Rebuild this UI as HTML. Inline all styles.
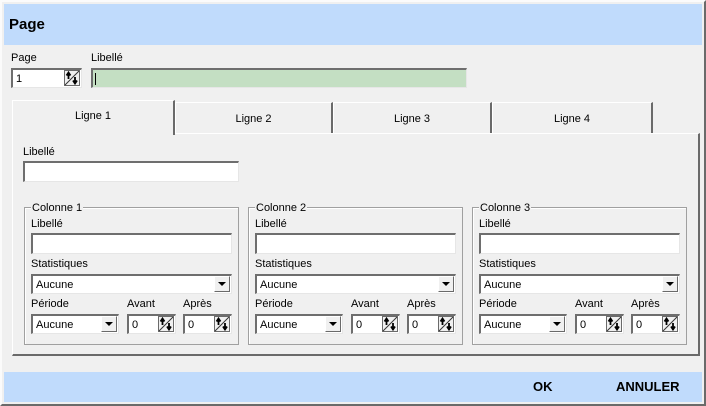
<!DOCTYPE html>
<html><head><meta charset="utf-8"><style>
*{margin:0;padding:0;box-sizing:border-box}
body{width:706px;height:406px;background:#f0f0f0;position:relative;overflow:hidden;font-family:"Liberation Sans",sans-serif;font-size:11px;color:#000}
.a{position:absolute}
.frame{left:0;top:0;width:706px;height:406px;border-top:2px solid #fbfbfb;border-left:2px solid #fbfbfb;border-right:2px solid #6a6a6a;border-bottom:2px solid #6a6a6a}
.hdr{left:4px;top:4px;width:698px;height:41px;background:#c0dbfc}
.ftr{left:4px;top:372px;width:698px;height:30px;background:#c0dbfc}
.in{position:absolute;background:#fff;border-top:2px solid #6e6e6e;border-left:2px solid #6e6e6e;border-right:1px solid #e6e6e6;border-bottom:1px solid #e6e6e6}
.lbl{position:absolute;font-size:11px;line-height:12px;white-space:nowrap}
.dd{position:absolute;right:1px;top:0px;width:16px;height:16px;background:#f0f0f0;border-top:1px solid #fff;border-left:1px solid #fff;border-right:1px solid #6a6a6a;border-bottom:1px solid #6a6a6a}
.dd:after{content:"";position:absolute;left:3px;top:5px;border-left:4px solid transparent;border-right:4px solid transparent;border-top:4px solid #000}
.val{position:absolute;left:3px;top:3px;font-size:11px}
.sp{position:absolute;right:1px;top:0px;width:16px;height:16px}
.tab{position:absolute;text-align:center;font-size:11px;border-top:1px solid #fff;border-left:1px solid #fff;border-right:2px solid #6a6a6a}
.grp{position:absolute;border:1px solid #a0a0a0;box-shadow:1px 1px 0 #fff inset}
.gt{position:absolute;top:-6px;left:6px;background:#f0f0f0;font-size:11px;line-height:12px;padding:0 1px}
</style></head><body>
<div class="a frame"></div>
<div class="a hdr"><div class="a" style="left:5px;top:12px;font-size:15px;font-weight:bold">Page</div></div>

<div class="lbl" style="left:11px;top:52px">Page</div>
<div class="in" style="left:11px;top:68px;width:71px;height:20px"><span class="val">1</span>
<svg class="sp" viewBox="0 0 16 16"><rect x="0.5" y="0.5" width="15" height="15" fill="#f0f0f0" stroke="#6a6a6a"/><line x1="1" y1="15" x2="15" y2="1" stroke="#333"/><path d="M4.5 9V3M2.5 5.5l2-3 2 3" stroke="#000" stroke-width="1.8" fill="none"/><path d="M11 7v6M9 10.5l2 3 2-3" stroke="#000" stroke-width="1.8" fill="none"/></svg></div>
<div class="lbl" style="left:91px;top:52px">Libellé</div>
<div class="in" style="left:91px;top:68px;width:376px;height:20px;background:#c4dfc3"><div class="a" style="left:2px;top:3px;width:1px;height:12px;background:#000"></div></div>

<div class="a" style="left:12px;top:133px;width:688px;height:223px;border-left:1px solid #fff;border-top:1px solid #fff;border-right:2px solid #6a6a6a;border-bottom:2px solid #6a6a6a"></div>
<div class="tab" style="left:12px;top:100px;width:163px;height:35px;line-height:30px;background:#f0f0f0;border-bottom:none">Ligne 1</div>
<div class="tab" style="left:175px;top:102px;width:158px;height:31px;line-height:32px">Ligne 2</div>
<div class="tab" style="left:333px;top:102px;width:159px;height:31px;line-height:32px">Ligne 3</div>
<div class="tab" style="left:492px;top:102px;width:161px;height:31px;line-height:32px">Ligne 4</div>

<div class="lbl" style="left:23px;top:146px">Libellé</div>
<div class="in" style="left:23px;top:161px;width:216px;height:21px"></div>

<div class="grp" style="left:24px;top:207px;width:215px;height:138px"><div class="gt">Colonne 1</div></div>
<div class="grp" style="left:248px;top:207px;width:215px;height:138px"><div class="gt">Colonne 2</div></div>
<div class="grp" style="left:472px;top:207px;width:215px;height:138px"><div class="gt">Colonne 3</div></div>

<div class="lbl" style="left:31px;top:218px">Libellé</div>
<div class="in" style="left:31px;top:233px;width:201px;height:21px"></div>
<div class="lbl" style="left:31px;top:258px">Statistiques</div>
<div class="in" style="left:31px;top:274px;width:201px;height:20px"><span class="val">Aucune</span><div class="dd"></div></div>
<div class="lbl" style="left:31px;top:298px">Période</div>
<div class="lbl" style="left:127px;top:298px">Avant</div>
<div class="lbl" style="left:183px;top:298px">Après</div>
<div class="in" style="left:31px;top:314px;width:88px;height:20px"><span class="val">Aucune</span><div class="dd"></div></div>
<div class="in" style="left:127px;top:314px;width:49px;height:20px"><span class="val">0</span><svg class="sp" viewBox="0 0 16 16"><rect x="0.5" y="0.5" width="15" height="15" fill="#f0f0f0" stroke="#6a6a6a"/><line x1="1" y1="15" x2="15" y2="1" stroke="#333"/><path d="M4.5 9V3M2.5 5.5l2-3 2 3" stroke="#000" stroke-width="1.8" fill="none"/><path d="M11 7v6M9 10.5l2 3 2-3" stroke="#000" stroke-width="1.8" fill="none"/></svg></div>
<div class="in" style="left:183px;top:314px;width:49px;height:20px"><span class="val">0</span><svg class="sp" viewBox="0 0 16 16"><rect x="0.5" y="0.5" width="15" height="15" fill="#f0f0f0" stroke="#6a6a6a"/><line x1="1" y1="15" x2="15" y2="1" stroke="#333"/><path d="M4.5 9V3M2.5 5.5l2-3 2 3" stroke="#000" stroke-width="1.8" fill="none"/><path d="M11 7v6M9 10.5l2 3 2-3" stroke="#000" stroke-width="1.8" fill="none"/></svg></div>

<div class="lbl" style="left:255px;top:218px">Libellé</div>
<div class="in" style="left:255px;top:233px;width:201px;height:21px"></div>
<div class="lbl" style="left:255px;top:258px">Statistiques</div>
<div class="in" style="left:255px;top:274px;width:201px;height:20px"><span class="val">Aucune</span><div class="dd"></div></div>
<div class="lbl" style="left:255px;top:298px">Période</div>
<div class="lbl" style="left:351px;top:298px">Avant</div>
<div class="lbl" style="left:407px;top:298px">Après</div>
<div class="in" style="left:255px;top:314px;width:88px;height:20px"><span class="val">Aucune</span><div class="dd"></div></div>
<div class="in" style="left:351px;top:314px;width:49px;height:20px"><span class="val">0</span><svg class="sp" viewBox="0 0 16 16"><rect x="0.5" y="0.5" width="15" height="15" fill="#f0f0f0" stroke="#6a6a6a"/><line x1="1" y1="15" x2="15" y2="1" stroke="#333"/><path d="M4.5 9V3M2.5 5.5l2-3 2 3" stroke="#000" stroke-width="1.8" fill="none"/><path d="M11 7v6M9 10.5l2 3 2-3" stroke="#000" stroke-width="1.8" fill="none"/></svg></div>
<div class="in" style="left:407px;top:314px;width:49px;height:20px"><span class="val">0</span><svg class="sp" viewBox="0 0 16 16"><rect x="0.5" y="0.5" width="15" height="15" fill="#f0f0f0" stroke="#6a6a6a"/><line x1="1" y1="15" x2="15" y2="1" stroke="#333"/><path d="M4.5 9V3M2.5 5.5l2-3 2 3" stroke="#000" stroke-width="1.8" fill="none"/><path d="M11 7v6M9 10.5l2 3 2-3" stroke="#000" stroke-width="1.8" fill="none"/></svg></div>

<div class="lbl" style="left:479px;top:218px">Libellé</div>
<div class="in" style="left:479px;top:233px;width:201px;height:21px"></div>
<div class="lbl" style="left:479px;top:258px">Statistiques</div>
<div class="in" style="left:479px;top:274px;width:201px;height:20px"><span class="val">Aucune</span><div class="dd"></div></div>
<div class="lbl" style="left:479px;top:298px">Période</div>
<div class="lbl" style="left:575px;top:298px">Avant</div>
<div class="lbl" style="left:631px;top:298px">Après</div>
<div class="in" style="left:479px;top:314px;width:88px;height:20px"><span class="val">Aucune</span><div class="dd"></div></div>
<div class="in" style="left:575px;top:314px;width:49px;height:20px"><span class="val">0</span><svg class="sp" viewBox="0 0 16 16"><rect x="0.5" y="0.5" width="15" height="15" fill="#f0f0f0" stroke="#6a6a6a"/><line x1="1" y1="15" x2="15" y2="1" stroke="#333"/><path d="M4.5 9V3M2.5 5.5l2-3 2 3" stroke="#000" stroke-width="1.8" fill="none"/><path d="M11 7v6M9 10.5l2 3 2-3" stroke="#000" stroke-width="1.8" fill="none"/></svg></div>
<div class="in" style="left:631px;top:314px;width:49px;height:20px"><span class="val">0</span><svg class="sp" viewBox="0 0 16 16"><rect x="0.5" y="0.5" width="15" height="15" fill="#f0f0f0" stroke="#6a6a6a"/><line x1="1" y1="15" x2="15" y2="1" stroke="#333"/><path d="M4.5 9V3M2.5 5.5l2-3 2 3" stroke="#000" stroke-width="1.8" fill="none"/><path d="M11 7v6M9 10.5l2 3 2-3" stroke="#000" stroke-width="1.8" fill="none"/></svg></div>

<div class="a ftr">
<div class="a" style="left:529px;top:7px;font-size:13px;font-weight:bold">OK</div>
<div class="a" style="left:612px;top:7px;font-size:13px;font-weight:bold">ANNULER</div>
</div>
</body></html>
